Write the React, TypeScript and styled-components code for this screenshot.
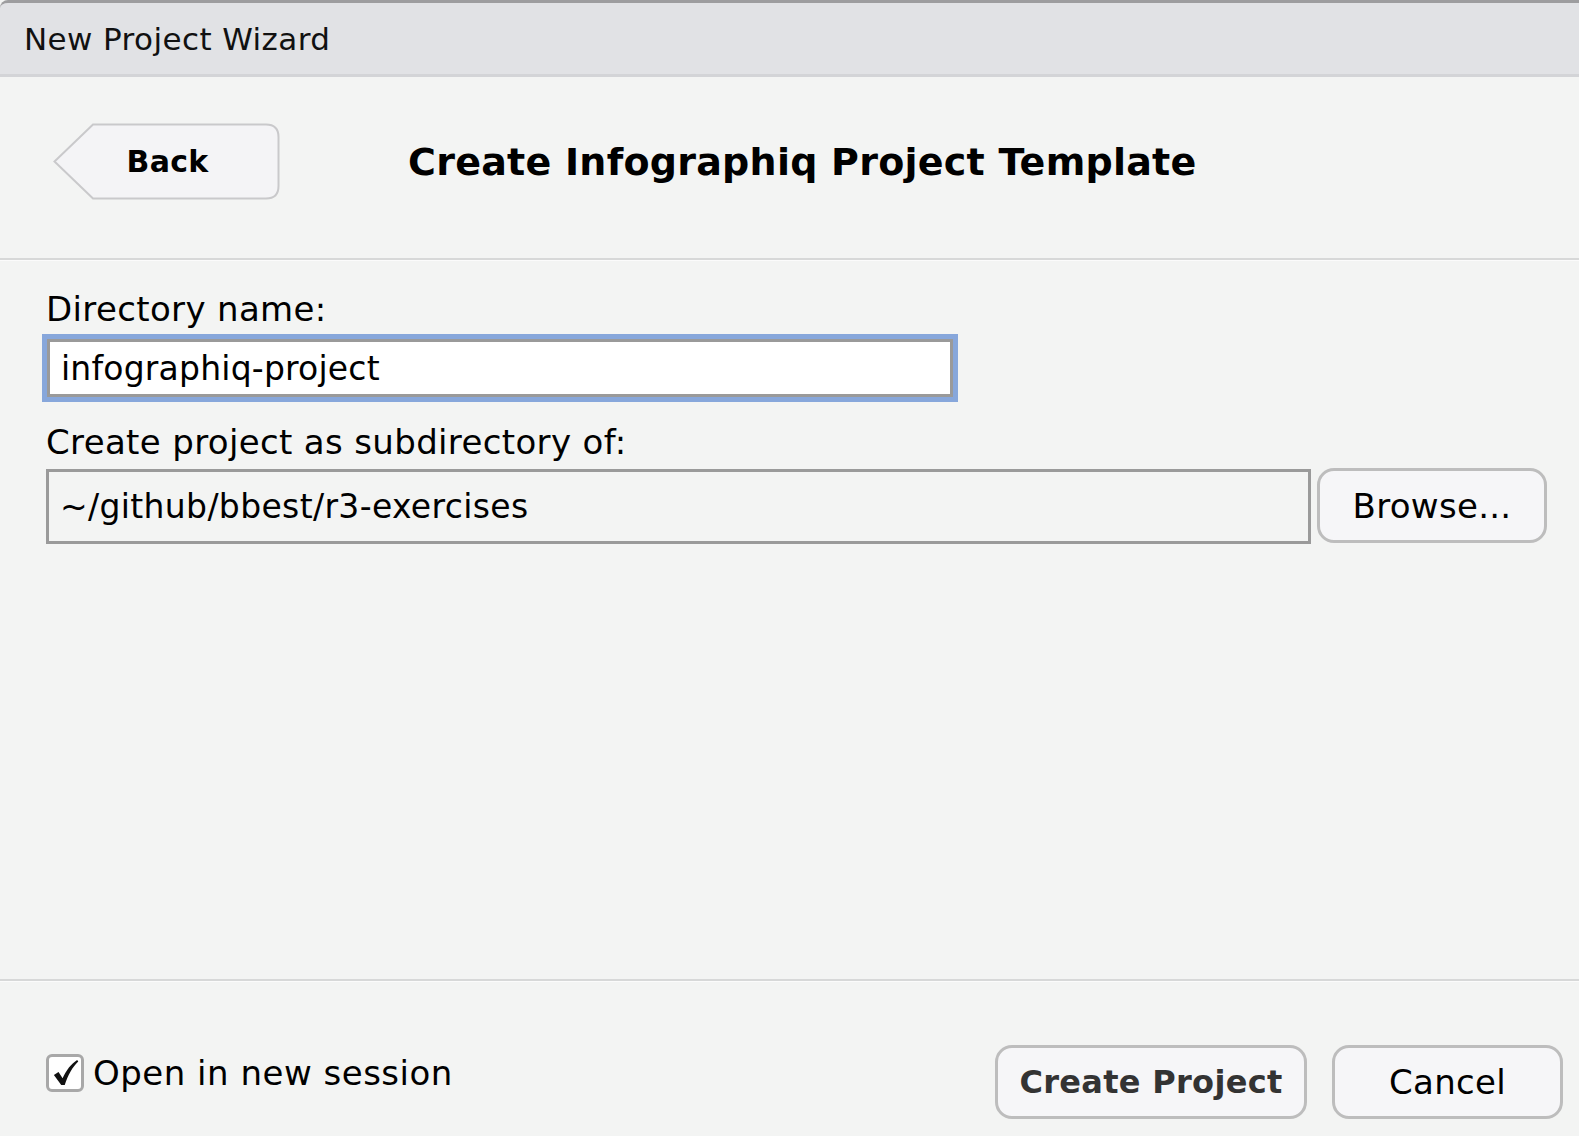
import styled, {createGlobalStyle} from 'styled-components';

const GlobalStyle = createGlobalStyle`
  html, body {
    margin: 0;
    padding: 0;
    background: #f3f4f3;
  }
  body {
    font-family: 'DejaVu Sans', 'Liberation Sans', sans-serif;
    color: #000;
  }
`;

function BackShape() {
  return (
    <BackSvg viewBox="0 0 227 77" width="227" height="77">
      <path
        d="M40 1.5 H213 Q225.5 1.5 225.5 14 V63 Q225.5 75.5 213 75.5 H40 L1.5 38.5 Z"
        fill="#f4f4f6"
        stroke="#c9c9cb"
        strokeWidth="2"
      />
    </BackSvg>
  );
}

function CheckMark() {
  return (
    <svg viewBox="0 0 32 32" width="31" height="31">
      <path
        d="M4 18.5 L8.8 15.5 L13 22 C17 13 21.5 7.5 28 3 L29.2 4.6 C23 10.5 18.5 18.5 15.2 29 L11.6 29 Z"
        fill="#111"
      />
    </svg>
  );
}

export default function App() {
  return (
    <>
      <GlobalStyle />
      <Window>
        <TitleBar>New Project Wizard</TitleBar>
        <Header>
          <BackButton>
            <BackShape />
            <BackLabel>Back</BackLabel>
          </BackButton>
          <PageTitle>Create Infographiq Project Template</PageTitle>
        </Header>
        <Divider />
        <Content>
          <Label $bottom={10}>Directory name:</Label>
          <TextInput $focused defaultValue="infographiq-project" />
          <Label $top={25} $bottom={5}>Create project as subdirectory of:</Label>
          <PathRow>
            <PathBox>~/github/bbest/r3-exercises</PathBox>
            <PushButton $w={230}>Browse...</PushButton>
          </PathRow>
        </Content>
        <Divider />
        <Footer>
          <CheckRow>
            <CheckBox>
              <CheckMark />
            </CheckBox>
            <CheckLabel>Open in new session</CheckLabel>
          </CheckRow>
          <FooterButtons>
            <PushButton $w={312} $h={74} $bold>Create Project</PushButton>
            <PushButton $w={231} $h={74}>Cancel</PushButton>
          </FooterButtons>
        </Footer>
      </Window>
    </>
  );
}

const Window = styled.div`
  height: 100vh;
  display: flex;
  flex-direction: column;
  background: #f3f4f3;
  overflow: hidden;
`;

const TitleBar = styled.div`
  height: 71px;
  flex-shrink: 0;
  display: flex;
  align-items: center;
  padding-left: 24px;
  background: #e1e2e5;
  border-top: 3px solid #9d9d9f;
  border-bottom: 3px solid #d3d4d7;
  border-top-left-radius: 8px;
  font-size: 31px;
  letter-spacing: 0.4px;
  color: #111;
`;

const Header = styled.div`
  height: 181px;
  box-sizing: border-box;
  flex-shrink: 0;
  display: flex;
  align-items: center;
  padding: 0 0 12px 53px;
  gap: 128px;
`;

const BackButton = styled.div`
  position: relative;
  width: 227px;
  height: 77px;
  display: flex;
  align-items: center;
  justify-content: center;
  margin-top: -1px;
`;

const BackSvg = styled.svg`
  position: absolute;
  inset: 0;
`;

const BackLabel = styled.span`
  position: relative;
  font-size: 30px;
  font-weight: bold;
  padding-left: 2px;
  letter-spacing: 0.3px;
`;

const PageTitle = styled.h1`
  margin: 0;
  font-size: 38px;
  font-weight: bold;
  letter-spacing: 0.25px;
`;

const Divider = styled.div`
  height: 2px;
  flex-shrink: 0;
  background: #d7d8d8;
  border-bottom: 1px solid #fbfbfb;
`;

const Content = styled.div`
  flex: 1;
  display: flex;
  flex-direction: column;
  align-items: flex-start;
  padding: 28px 0 0 46px;
`;

const Label = styled.div<{$top?: number; $bottom?: number}>`
  font-size: 34px;
  line-height: 40px;
  letter-spacing: 0.35px;
  margin-top: ${(p) => p.$top ?? 0}px;
  margin-bottom: ${(p) => p.$bottom ?? 0}px;
`;

const TextInput = styled.input<{$focused?: boolean}>`
  box-sizing: border-box;
  width: 906px;
  height: 58px;
  margin: 0 0 0 1px;
  padding: 0 11px;
  font-family: inherit;
  font-size: 33px;
  letter-spacing: 0.2px;
  color: #000;
  background: #fff;
  border: 3px solid #9a9a9a;
  outline: none;
  box-shadow: ${(p) => (p.$focused ? '0 0 0 5px #87a7db' : 'none')};
`;

const PathRow = styled.div`
  display: flex;
  align-items: center;
  gap: 6px;
`;

const PathBox = styled.div`
  box-sizing: border-box;
  width: 1265px;
  height: 75px;
  display: flex;
  align-items: center;
  padding-left: 11px;
  font-size: 33px;
  letter-spacing: 0.35px;
  border: 3px solid #9a9a9a;
  margin-top: 2px;
`;

const PushButton = styled.button<{$w: number; $h?: number; $bold?: boolean}>`
  box-sizing: border-box;
  width: ${(p) => p.$w}px;
  height: ${(p) => p.$h ?? 75}px;
  font-family: inherit;
  font-size: ${(p) => (p.$bold ? 32 : 34)}px;
  font-weight: ${(p) => (p.$bold ? 'bold' : 'normal')};
  letter-spacing: 0.3px;
  color: ${(p) => (p.$bold ? '#333' : '#000')};
  background: #f6f6f8;
  border: 3px solid #bdbdbd;
  border-radius: 17px;
  padding: 0;
`;

const Footer = styled.div`
  height: 154px;
  box-sizing: border-box;
  flex-shrink: 0;
  display: flex;
  align-items: center;
  justify-content: space-between;
  padding: 46px 16px 0 46px;
`;

const CheckRow = styled.div`
  display: flex;
  align-items: center;
  gap: 9px;
  margin-top: -19px;
`;

const CheckBox = styled.div`
  box-sizing: border-box;
  width: 38px;
  height: 38px;
  border: 3px solid #a8a8a8;
  border-radius: 6px;
  background: #fff;
  display: flex;
  align-items: center;
  justify-content: center;
`;

const CheckLabel = styled.span`
  font-size: 34px;
  letter-spacing: 0.5px;
`;

const FooterButtons = styled.div`
  display: flex;
  gap: 25px;
`;
